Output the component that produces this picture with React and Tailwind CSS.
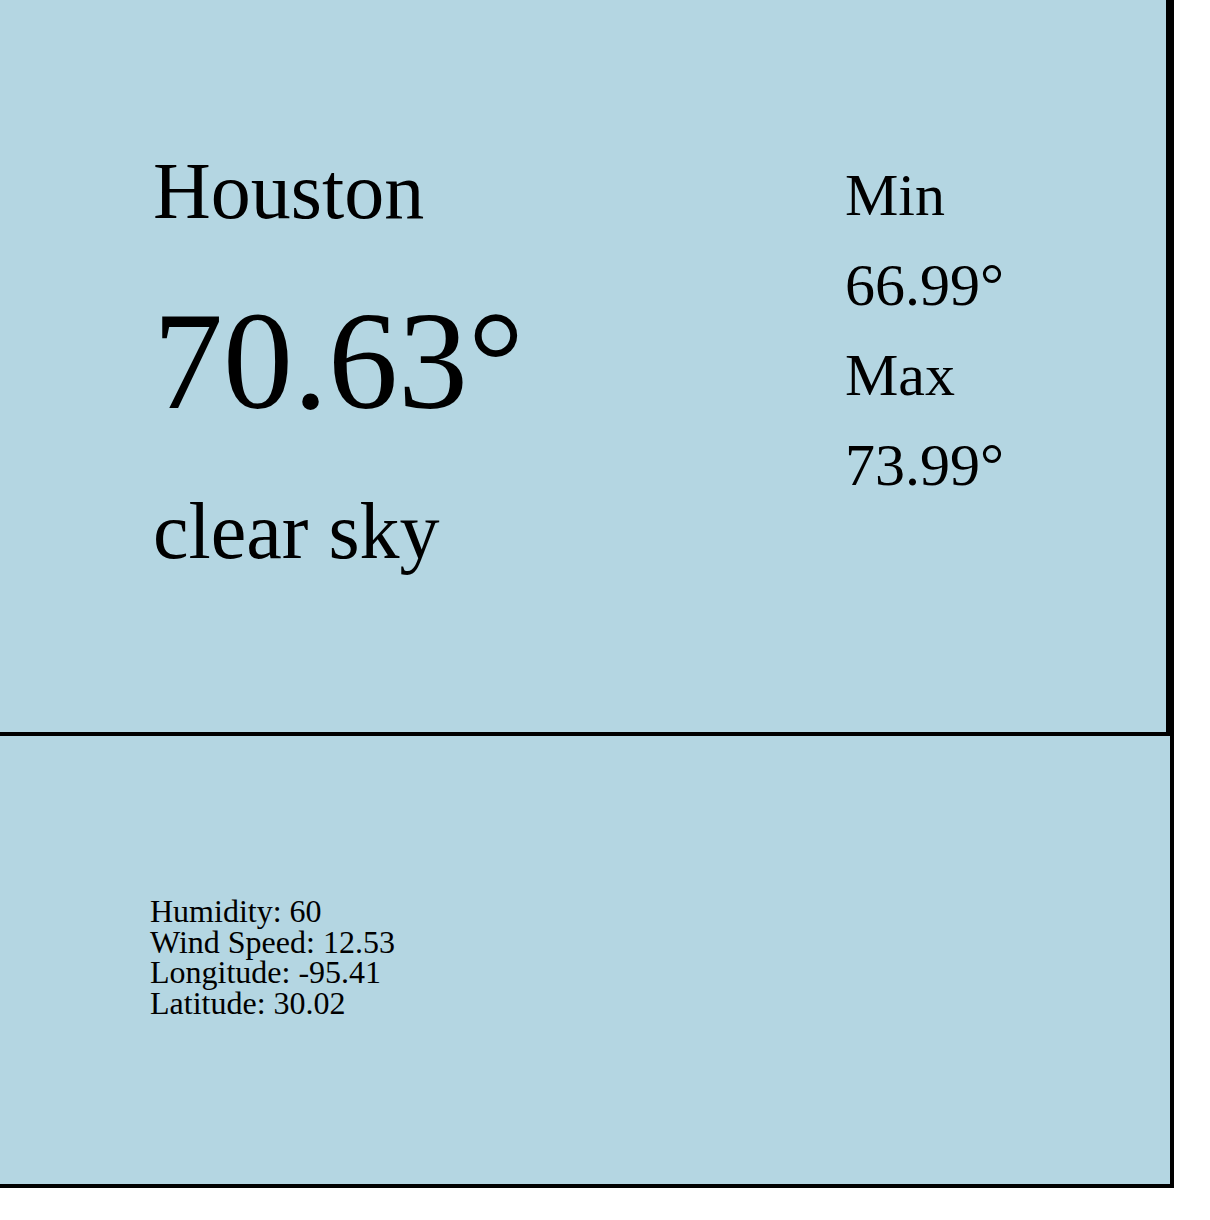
import React from 'react';

export default function App() {
  const weather = {
    city: 'Houston',
    temp: '70.63°',
    desc: 'clear sky',
    min: '66.99°',
    max: '73.99°',
  };

  const details = [
    'Humidity: 60',
    'Wind Speed: 12.53',
    'Longitude: -95.41',
    'Latitude: 30.02',
  ];

  return (
    <div className="bg-white min-h-[1220px] font-['Liberation_Serif',serif] text-black">
      <div className="w-[1174px] bg-[#b4d6e2] border-r-4 border-b-4 border-black">
        {/* Main weather card */}
        <div className="h-[736px] border-r-4 border-b-4 border-black flex pl-[153px]">
          <div className="w-[692px] flex flex-col gap-[60px] pt-[151px]">
            <div className="text-[80px] leading-none">{weather.city}</div>
            <div className="text-[140px] leading-none">{weather.temp}</div>
            <div className="text-[80px] leading-none">{weather.desc}</div>
          </div>
          <div className="flex flex-col gap-[30px] pt-[165px] text-[60px] leading-none">
            <div>Min</div>
            <div>{weather.min}</div>
            <div>Max</div>
            <div>{weather.max}</div>
          </div>
        </div>

        {/* Details */}
        <div className="h-[448px] pl-[150px] pt-[160px] text-[32px] leading-[30.5px]">
          {details.map((d, i) => (
            <div key={i}>{d}</div>
          ))}
        </div>
      </div>
    </div>
  );
}
